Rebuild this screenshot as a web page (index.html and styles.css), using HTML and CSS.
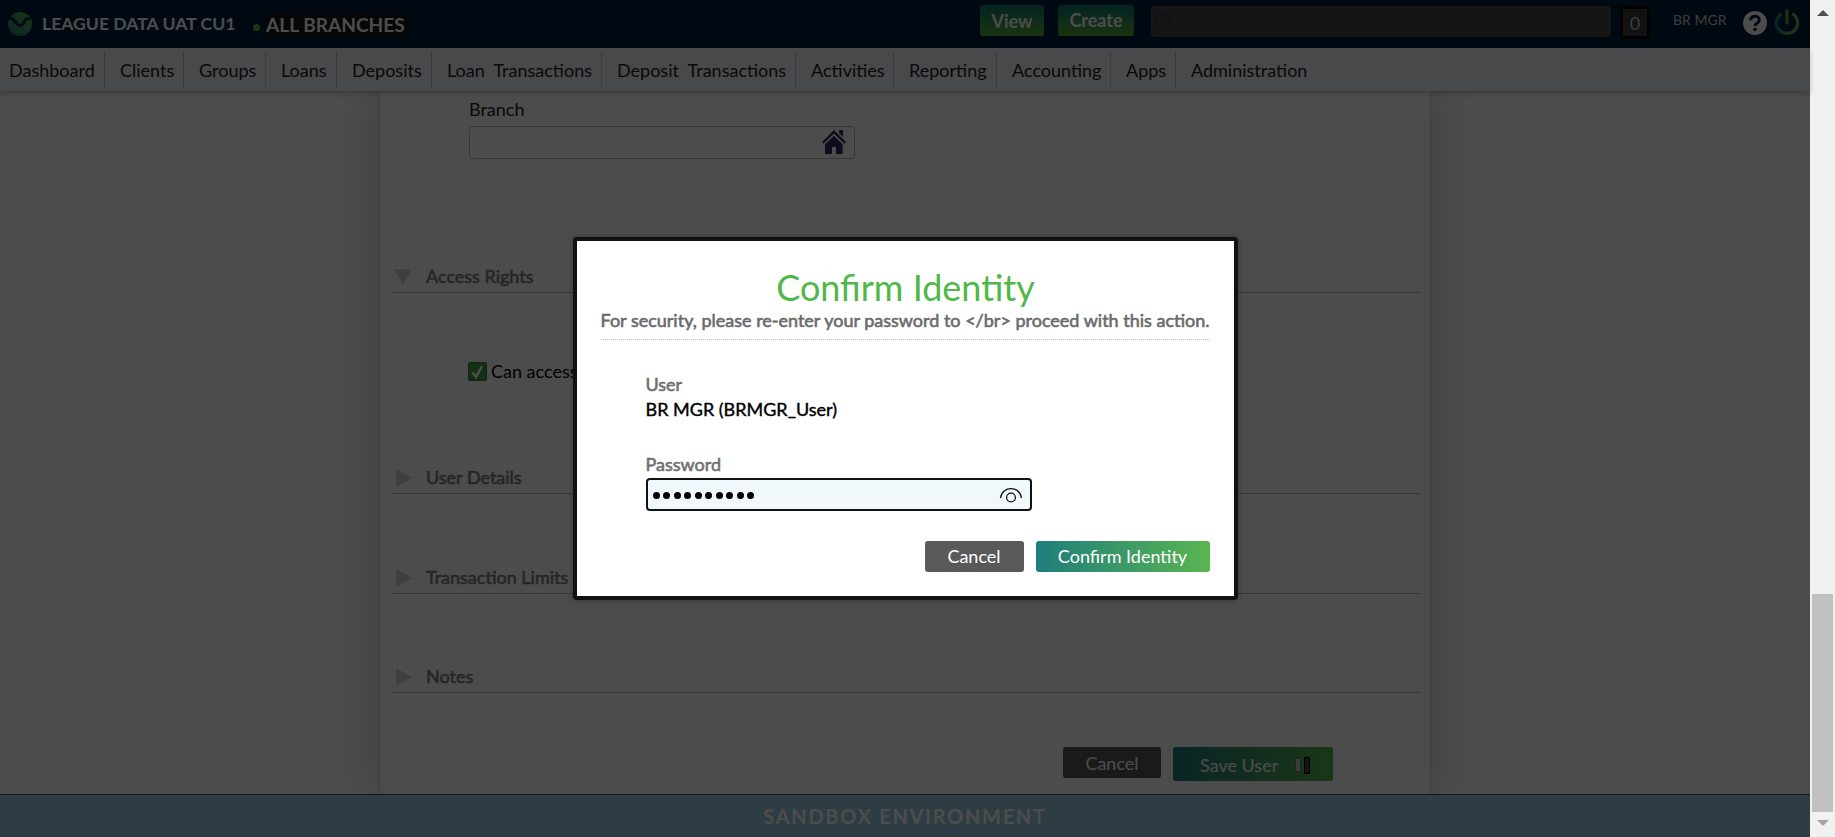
FILE: index.html
```html
<!DOCTYPE html>
<html lang="en">
<head>
<meta charset="utf-8">
<title>Confirm Identity</title>
<link rel="stylesheet" href="styles.css">
</head>
<body>
<div class="window">
  <div class="page">
    <header class="topbar">
      <svg class="logo" viewBox="0 0 24 24"><defs><linearGradient id="lg" x1="0" y1="1" x2="1" y2="0"><stop offset="0" stop-color="#1f7b7b"/><stop offset="1" stop-color="#5ab550"/></linearGradient></defs><circle cx="12" cy="12" r="12" fill="url(#lg)"/><path d="M0 6.5C7 4 7 13.5 12 13.5S15 4.5 22 7" fill="none" stroke="#001e3c" stroke-width="3"/></svg>
      <span class="org">LEAGUE DATA UAT CU1</span>
      <span class="dot"></span>
      <span class="branches">ALL BRANCHES</span>
      <button class="top-btn view">View</button>
      <button class="top-btn create">Create</button>
      <div class="search"><svg viewBox="0 0 20 20"><circle cx="8.2" cy="8.2" r="6.8" fill="none" stroke="#3d3866" stroke-width="2"/><path d="M13 13l6 6" stroke="#3d3866" stroke-width="2.4"/></svg></div>
      <span class="count">0</span>
      <span class="who">BR MGR</span>
      <svg class="help" viewBox="0 0 24 24"><circle cx="12" cy="12" r="12" fill="#fff"/><path d="M7.7 9.3C7.7 3.8 16.3 4 16.3 9c0 3.3-4.3 3-4.3 6" fill="none" stroke="#001e3c" stroke-width="3"/><circle cx="12" cy="18.5" r="1.8" fill="#001e3c"/></svg>
      <svg class="power" viewBox="0 0 26 26"><defs><linearGradient id="pg"><stop offset="0" stop-color="#1f7b7b"/><stop offset=".6" stop-color="#5ab550"/></linearGradient></defs><path d="M6.5 5.5a10.6 10.6 0 1 0 13 0" fill="none" stroke="url(#pg)" stroke-width="3.2" stroke-linecap="round"/><path d="M13 1.8v12" stroke="#4fa650" stroke-width="3.4" stroke-linecap="round"/></svg>
    </header>
    <nav class="menu">
      <a class="m1">Dashboard</a><a class="m2">Clients</a><a class="m3">Groups</a><a class="m4">Loans</a><a class="m5">Deposits</a><a class="m6">Loan&nbsp; Transactions</a><a class="m7">Deposit&nbsp; Transactions</a><a class="m8">Activities</a><a class="m9">Reporting</a><a class="m10">Accounting</a><a class="m11">Apps</a><a class="m12">Administration</a>
    </nav>
    <main class="panel">
      <div class="field">
        <label>Branch</label>
        <div class="branch-input"><svg viewBox="0 0 24 24"><path d="M12 0l12 12-1.6 1.8L12 3.6 1.6 13.8 0 12zM17 0h4v7l-4-4zM12 5.8l8.6 8.4V24H14v-7h-4v7H3V14.2z" fill="#332b60"/></svg></div>
      </div>
      <section class="group access"><svg viewBox="0 0 18 18"><path d="M0 1h18L9 17z"/></svg><h2>Access Rights</h2></section>
      <div class="check"><span class="box"><svg viewBox="0 0 17 17"><path d="M3.5 9.5l3.5 4.5L13 3" fill="none" stroke="#fff" stroke-width="2.4"/></svg></span><span>Can access</span></div>
      <section class="group details"><svg viewBox="0 0 18 18"><path d="M2 0v18l16-9z"/></svg><h2>User Details</h2></section>
      <section class="group limits"><svg viewBox="0 0 18 18"><path d="M2 0v18l16-9z"/></svg><h2>Transaction Limits</h2></section>
      <section class="group notes"><svg viewBox="0 0 18 18"><path d="M2 0v18l16-9z"/></svg><h2>Notes</h2></section>
      <div class="form-actions"><button class="btn grey">Cancel</button><button class="btn green save">Save User<span class="bars"><i></i><b></b></span></button></div>
    </main>
    <footer class="env">SANDBOX ENVIRONMENT</footer>
    <div class="overlay">
      <div class="modal">
        <h1>Confirm Identity</h1>
        <p class="hint">For security, please re-enter your password to &lt;/br&gt; proceed with this action.</p>
        <div class="creds">
          <div class="label">User</div>
          <div class="value">BR MGR (BRMGR_User)</div>
          <div class="label pw">Password</div>
          <div class="pw-input"><span class="dots"><i></i><i></i><i></i><i></i><i></i><i></i><i></i><i></i><i></i><i></i></span><svg viewBox="0 0 24 16"><path d="M1.5 11C3 -1.5 21 -1.5 22.5 11" fill="none" stroke="#111" stroke-width="1.3"/><circle cx="12" cy="10.5" r="4.4" fill="none" stroke="#111" stroke-width="1.3"/></svg></div>
        </div>
        <div class="modal-actions"><button class="btn grey">Cancel</button><button class="btn green">Confirm Identity</button></div>
      </div>
    </div>
  </div>
  <div class="scrollbar"><svg viewBox="0 0 12 6"><path d="M6 0l6 6H0z" fill="#505050"/></svg><div class="thumb"></div><svg viewBox="0 0 12 6"><path d="M0 0h12L6 6z" fill="#a3a3a3"/></svg></div>
</div>
</body>
</html>
```
FILE: styles.css
```css
* { box-sizing: border-box; }
body { margin: 0; font-family: Lato, Carlito, sans-serif; font-size: 18px; color: #222; }
button { border: 0; padding: 0; font-family: inherit; color: #fff; }
svg { display: block; flex: none; }
.window { display: flex; width: 1835px; height: 837px; overflow: hidden; }
.page { position: relative; width: 1810px; height: 837px; background: #fff; display: flex; flex-direction: column; }
.topbar { height: 48px; flex: none; background: #001e3c; color: #fff; display: flex; align-items: flex-start; }
.logo { width: 24px; height: 24px; margin: 12px 10px 0 8px; }
.org { width: 211px; margin-top: 13px; line-height: 22px; font-size: 17.6px; font-weight: 700; white-space: nowrap; }
.dot { width: 7px; height: 7px; border-radius: 50%; background: #54b948; margin-top: 24px; }
.branches { width: 140px; height: 22px; margin: 14px 573px 0 6px; background: #141414; line-height: 22px; font-size: 19.1px; font-weight: 700; white-space: nowrap; }
.top-btn { height: 31px; margin-top: 5px; border-radius: 3px; background: linear-gradient(#087776, #56ae32); font-size: 18px; font-weight: 700; }
.view { width: 64px; margin-right: 14px; margin-left: 1px; }
.create { width: 76px; margin-right: 17px; padding-bottom: 2px; }
.search { width: 460px; height: 31px; margin: 6px 9px 0 0; background: #464646; border-radius: 3px; padding: 6px 4px; }
.search svg { width: 20px; height: 20px; }
.count { width: 30px; height: 33px; margin: 6px 23px 0 0; border: 3px solid #000; border-radius: 3px; background: #3c3c3c; text-align: center; line-height: 29px; font-size: 18px; color: #ccc; }
.who { width: 70px; margin-top: 10px; line-height: 20px; font-size: 14px; color: #ccc; white-space: nowrap; }
.help { width: 24px; height: 24px; margin: 11px 7px 0 0; }
.power { width: 26px; height: 26px; margin-top: 9px; }
.menu { position: relative; height: 43px; flex: none; padding-top: 4px; background: #f0f3f8; box-shadow: 0 3px 5px rgba(0,0,0,.2); display: flex; }
.menu a { height: 36px; border-right: 1px solid #bfc2c8; padding-left: 15px; line-height: 36px; white-space: nowrap; }
.menu .m1 { width: 105px; padding-left: 9px; }
.m2 { width: 79px; } .m3 { width: 82px; } .m4 { width: 71px; } .m5 { width: 95px; } .m6 { width: 170px; }
.m7 { width: 194px; } .m8 { width: 98px; } .m9 { width: 103px; } .m10 { width: 114px; } .m11 { width: 65px; }
.menu .m12 { border: 0; }
.panel { width: 1052px; height: 703px; flex: none; margin-left: 379px; padding: 0 10px 0 11px; border: solid #ccc; border-width: 0 1px; box-shadow: 0 0 45px rgba(0,0,0,.2); clip-path: inset(0 -60px); }
.field { height: 139px; padding: 6px 0 0 78px; }
.field label { display: block; height: 29px; line-height: 24px; }
.branch-input { width: 386px; height: 33px; border: 1px solid #bbb; border-radius: 4px; display: flex; justify-content: flex-end; padding: 3px 8px; }
.branch-input svg { width: 24px; height: 24px; }
.group { border-bottom: 1px solid #bbb; display: flex; align-items: flex-end; padding: 0 0 6px 3px; }
.group svg { width: 18px; height: 18px; fill: #d2d2d2; }
.group h2 { margin: 0 0 -1px 14px; font-size: 18px; line-height: 22px; font-weight: 400; -webkit-text-stroke: .6px; color: #808080; }
.access { height: 63px; }
.check { height: 131px; padding: 67px 0 0 76px; display: flex; gap: 4px; line-height: 22px; color: #000; }
.box { width: 19px; height: 19px; margin: 2px 0 0 1px; background: #45a245; border: 1px solid #378037; border-radius: 2px; }
.details { height: 70px; } .limits { height: 100px; } .notes { height: 99px; }
.form-actions { display: flex; gap: 12px; padding: 54px 0 0 672px; }
.btn { height: 31px; border-radius: 3px; font-size: 18px; padding-bottom: 1px; }
.grey { width: 98px; background: #595959; }
.form-actions .grey { padding: 1px 0 0; }
.green { width: 174px; background: linear-gradient(90deg, #1f7d7d, #5ab550); }
.save { width: 160px; height: 34px; display: flex; align-items: center; padding: 2px 0 0 27px; }
.bars { display: flex; gap: 3px; margin: 0 0 0 17px; align-items: center; }
.bars i { width: 6px; height: 14px; background: #ccc; border: 1px solid #777; }
.bars b { width: 6px; height: 17px; background: #444; border: 1px solid #000; }
.env { height: 43px; flex: none; border-top: 1px solid #555; background: #99cde5; text-align: center; line-height: 42px; font-size: 20px; font-weight: 700; letter-spacing: 1.7px; color: #fff; }
.overlay { position: absolute; inset: 0; background: rgba(0,0,0,.7); display: flex; justify-content: center; align-items: center; }
.modal { width: 665px; height: 363px; border: 4px solid #111; border-radius: 4px; background: #fff; padding: 25px 24px 24px; box-shadow: 0 0 5px rgba(0,0,0,.3); }
.modal h1 { margin: 0; height: 42px; line-height: 42px; padding-left: 1px; font-size: 36px; font-weight: 400; color: #4fb848; text-align: center; }
.hint { margin: 0; height: 32px; line-height: 24px; font-size: 18px; -webkit-text-stroke: .6px; color: #6b6b6b; border-bottom: 1px dotted #bbb; white-space: nowrap; }
.creds { padding: 32px 45px 0; height: 201px; }
.label { height: 25px; line-height: 24px; -webkit-text-stroke: .6px; color: #707070; }
.value { height: 55px; line-height: 24px; -webkit-text-stroke: .4px; color: #000; }
.pw-input { width: 386px; height: 33px; border: 2px solid #111; border-radius: 4px; background: #f0f8fb; display: flex; align-items: center; justify-content: space-between; padding: 1px 7px 0 5px; }
.pw { height: 26px; }
.dots { display: flex; gap: 3.5px; }
.dots i { width: 7px; height: 7px; border-radius: 50%; background: #000; }
.pw-input svg { width: 24px; height: 16px; }
.modal-actions { display: flex; justify-content: flex-end; gap: 12px; }
.modal-actions .grey { width: 99px; }
.scrollbar { width: 25px; height: 837px; background: #f1f1f1; display: flex; flex-direction: column; align-items: center; padding: 10px 0 11px; }
.scrollbar svg { width: 12px; height: 6px; }
.thumb { width: 21px; height: 218px; margin: auto 0 8px; background: #c1c1c1; }
```
